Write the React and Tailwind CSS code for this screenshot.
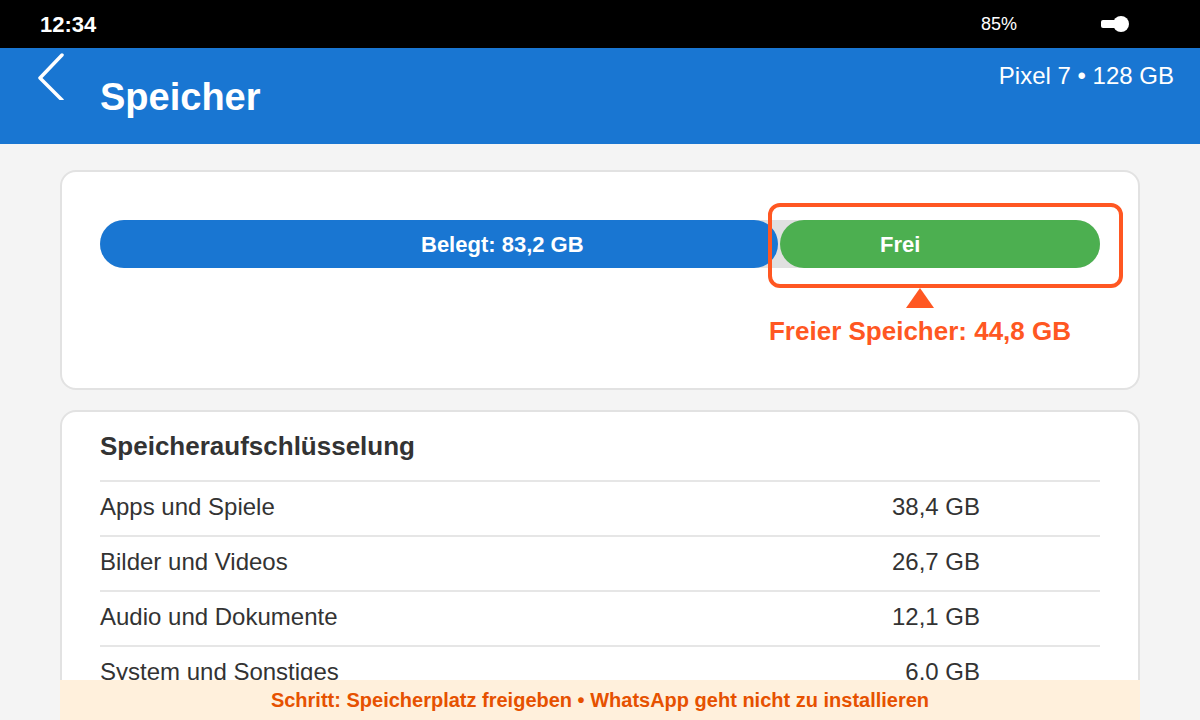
const rows = [
  { label: "Apps und Spiele", value: "38,4 GB" },
  { label: "Bilder und Videos", value: "26,7 GB" },
  { label: "Audio und Dokumente", value: "12,1 GB" },
  { label: "System und Sonstiges", value: "6.0 GB" },
];

const App = () => {
  return (
    <div className="relative w-[1200px] h-[720px] overflow-hidden bg-[#f4f4f4] font-['Liberation_Sans',Arial,sans-serif]">
      {/* status bar */}
      <div className="h-[48px] bg-black flex items-center text-white">
        <span className="ml-[40px] text-[22px] font-bold">12:34</span>
        <span className="ml-auto text-[18px]">85%</span>
        <svg className="ml-[83px] mr-[68px]" width="32" height="20" viewBox="0 0 32 20">
          <rect x="1" y="6" width="18" height="8" rx="2" fill="white" />
          <circle cx="21" cy="10" r="8" fill="white" />
        </svg>
      </div>

      {/* header */}
      <div className="h-[96px] bg-[#1976d2] flex items-start text-white">
        <div className="w-[100px] pl-[34px] pt-[4px]">
          <svg width="34" height="48" viewBox="0 0 34 48">
            <polyline points="28,3 6,26 28,48" fill="none" stroke="white" strokeWidth="3.5" strokeLinecap="round" strokeLinejoin="round" />
          </svg>
        </div>
        <h1 className="mt-[27px] text-[38px] leading-[44px] font-bold">Speicher</h1>
        <span className="ml-auto mr-[26px] mt-[14px] text-[24px] leading-[28px]">Pixel 7 • 128 GB</span>
      </div>

      {/* content */}
      <div className="px-[60px] pt-[26px] flex flex-col gap-[20px]">
        <div className="relative h-[220px] bg-white border-2 border-[#e2e2e2] rounded-[16px] px-[38px] pt-[48px]">
          <div className="h-[48px] rounded-full bg-[#e0e0e0] flex text-white text-[22px] font-bold">
            <div className="w-[678px] rounded-full bg-[#1976d2] flex items-center pl-[321px]">Belegt: 83,2 GB</div>
            <div className="ml-[2px] flex-1 rounded-full bg-[#4caf50] flex items-center pl-[100px]">Frei</div>
          </div>
          <div className="absolute left-[706px] top-[31px] w-[355px] h-[85px] border-4 border-[#ff5722] rounded-[12px]"></div>
          <div className="ml-[670px] w-[300px] flex flex-col items-center">
            <div className="mt-[20px] w-0 h-0 border-l-[14px] border-r-[14px] border-b-[20px] border-l-transparent border-r-transparent border-b-[#ff5722]"></div>
            <div className="mt-[9px] h-[28px] leading-[28px] text-[26px] font-bold text-[#ff5722] whitespace-nowrap">Freier Speicher: 44,8 GB</div>
          </div>
        </div>

        <div className="h-[400px] bg-white border-2 border-[#e2e2e2] rounded-[16px] px-[38px] pt-[18px]">
          <h2 className="h-[50px] leading-[32px] text-[26px] font-bold text-[#333]">Speicheraufschlüsselung</h2>
          {rows.map((row, index) => (
            <div key={index} className="h-[55px] border-t-2 border-[#e6e6e6] flex items-center justify-between pr-[120px] pb-[3px] text-[24px] text-[#333]">
              <span>{row.label}</span>
              <span>{row.value}</span>
            </div>
          ))}
        </div>
      </div>

      {/* step banner */}
      <div className="absolute left-[60px] bottom-0 w-[1080px] h-[40px] bg-[#fff0dc] flex items-center justify-center text-[20px] font-bold text-[#e65100]">
        Schritt: Speicherplatz freigeben • WhatsApp geht nicht zu installieren
      </div>
    </div>
  );
};

export default App;
